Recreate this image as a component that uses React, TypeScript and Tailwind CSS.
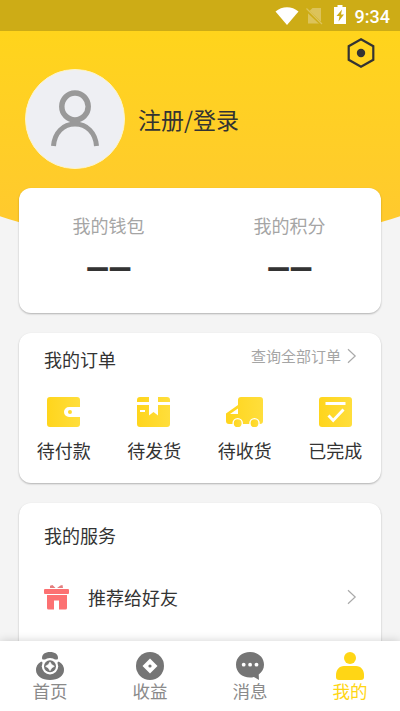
import type { ReactNode } from "react";

const WalletIcon = () => (
  <svg width="34" height="30" viewBox="0 0 34 30" fill="url(#gold)">
    <path d="M3 0h27a3 3 0 0 1 3 3v7H22a5 5 0 0 0 0 10h11v7a3 3 0 0 1-3 3H3a3 3 0 0 1-3-3V3a3 3 0 0 1 3-3z" />
    <circle cx="23" cy="15" r="2" />
  </svg>
);

const BoxIcon = () => (
  <svg width="34" height="30" viewBox="0 0 34 30" fill="url(#gold)" className="-ml-px">
    <path d="M3 0h9v5H0V3a3 3 0 0 1 3-3zM21 0h9a3 3 0 0 1 3 3v2H21z" />
    <path
      fillRule="evenodd"
      d="M0 8h12v10.500l4.500-3.500 4.500 3.500V8h12v19a3 3 0 0 1-3 3H3a3 3 0 0 1-3-3zM3 13v2h5v-2z"
    />
  </svg>
);

const TruckIcon = () => (
  <svg width="38" height="31" viewBox="0 0 38 31" fill="url(#gold)">
    <path
      fillRule="evenodd"
      d="M15 0h19a3 3 0 0 1 3 3v21a3 3 0 0 1-3 3H3a3 3 0 0 1-3-3v-7.500L12 8V3a3 3 0 0 1 3-3zM12 11.500L4 17h8z"
    />
    <circle cx="11.700" cy="26.200" r="4.600" stroke="#fff" strokeWidth="1.400" />
    <circle cx="28.500" cy="26.200" r="4.600" stroke="#fff" strokeWidth="1.400" />
  </svg>
);

const DoneIcon = () => (
  <svg width="33" height="30" viewBox="0 0 33 30">
    <rect width="33" height="30" rx="3" fill="url(#gold)" />
    <path d="M6.500 6.500h20M9.500 18.500l4.700 5L24.500 12.500" fill="none" stroke="#fff" strokeWidth="2.900" />
  </svg>
);

const HomeIcon = () => (
  <svg width="28" height="28" viewBox="0 0 28 28" fill="#757575">
    <path d="M6 6C6 2.300 9 0 14 0s8 2.300 8 6c0 1-.6 1.500-1.500 1.500h-13C6.600 7.500 6 7 6 6z" />
    <path d="M4.600 10c.8-.7 1.900-.4 2 1h14.800c.1-1.400 1.200-1.700 2-1A9.500 9.500 0 0 1 28 18c0 6-6 10-14 10S0 24 0 18a9.500 9.500 0 0 1 4.600-8z" />
    <circle cx="14" cy="14.300" r="8.200" fill="#fff" />
    <circle cx="14" cy="14.300" r="6" />
    <path d="M14 9.900l1.700 2.700 2.700 1.700-2.700 1.700-1.700 2.700-1.700-2.700-2.700-1.700 2.700-1.700z" fill="#fff" stroke="#fff" strokeWidth=".6" />
  </svg>
);

const CoinIcon = () => (
  <svg width="28" height="28" viewBox="0 0 28 28">
    <circle cx="14" cy="14" r="14" fill="#757575" />
    <path d="M14 6.500l7.500 7.500-7.500 7.500L6.500 14z" fill="#fff" />
    <circle cx="14" cy="14" r="1.600" fill="#757575" />
  </svg>
);

const MessageIcon = () => (
  <svg width="28" height="28" viewBox="0 0 28 28">
    <path
      d="M14 0C6 0 0 5.300 0 12.700S6 25.500 14 25.500c1.400 0 2.700-.1 3.900-.5l5.100 3-.3-5.500c3.300-2.300 5.300-5.800 5.300-9.800C28 5.300 22 0 14 0z"
      fill="#757575"
    />
    <g fill="#fff">
      <circle cx="7.700" cy="12.700" r="1.900" />
      <circle cx="14.100" cy="12.700" r="1.900" />
      <circle cx="20.500" cy="12.700" r="1.900" />
    </g>
  </svg>
);

const ProfileIcon = () => (
  <svg width="28" height="28" viewBox="0 0 28 28" fill="#ffd615">
    <circle cx="14" cy="6" r="6" />
    <path d="M8 14h12c5 0 8 4 8 9v2a3 3 0 0 1-3 3H3a3 3 0 0 1-3-3v-2c0-5 3-9 8-9z" />
  </svg>
);

const Chevron = () => (
  <svg width="10" height="16" viewBox="0 0 10 16" fill="none" stroke="#aaa" strokeWidth="1.200">
    <path d="M1 1.200L8.200 8 1 14.800" />
  </svg>
);

const orders = [
  { label: "待付款", icon: <WalletIcon /> },
  { label: "待发货", icon: <BoxIcon /> },
  { label: "待收货", icon: <TruckIcon /> },
  { label: "已完成", icon: <DoneIcon /> },
];

const tabs = [
  { label: "首页", icon: <HomeIcon />, active: false },
  { label: "收益", icon: <CoinIcon />, active: false },
  { label: "消息", icon: <MessageIcon />, active: false },
  { label: "我的", icon: <ProfileIcon />, active: true },
];

function Card({ className, children }: { className: string; children: ReactNode }) {
  return (
    <section
      className={`mx-[19px] rounded-xl bg-white shadow-[0_1px_2px_rgba(0,0,0,0.28)] ${className}`}
    >
      {children}
    </section>
  );
}

function Balance({ label }: { label: string }) {
  return (
    <div className="flex flex-1 flex-col items-center pt-[25px] pr-[2px]">
      <span className="text-[18px] leading-6 text-[#a5a5a5]">{label}</span>
      <span className="mt-[16px] font-[Roboto] text-[30px] leading-8 font-black text-[#333]">——</span>
    </div>
  );
}

function StatusBar() {
  return (
    <header className="relative flex h-[31px] shrink-0 items-center justify-end bg-[#cdac16] pr-[10px] text-white">
      <svg width="24" height="18" viewBox="0 0 24 18" fill="#fff" className="mr-[7px]">
        <path d="M0.500 4.500C7-1.200 17-1.200 23.500 4.500L12 18z" />
      </svg>
      <svg width="17" height="18" viewBox="0 0 17 18" className="mr-[11px]">
        <path d="M6.500 1H15v15.500H2V5.500z" fill="#dcc35a" />
        <path d="M0 2.500L15.500 17" stroke="#cdac16" strokeWidth="3" />
        <path d="M.500 1.500L16 17" stroke="#dcc35a" strokeWidth="1.300" />
      </svg>
      <svg width="12" height="19" viewBox="0 0 12 19" className="mr-[9px] -mt-[3px]">
        <path d="M3.500 0h5v2H12v17H0V2h3.500z" fill="#fff" />
        <path d="M8 4.500L2.500 11h3l-1 5.500L10 9.500H7z" fill="#cdac16" />
      </svg>
      <span className="mt-[3px] font-[Roboto] text-[18px] leading-5 font-medium">9:34</span>
    </header>
  );
}

export default function App() {
  return (
    <div className="relative flex h-[711px] w-full flex-col overflow-hidden bg-[#f4f4f4] font-['Noto_Sans_CJK_SC',sans-serif]">
      <svg width="0" height="0" className="absolute">
        <defs>
          <linearGradient id="gold">
            <stop offset="0" stopColor="#ffd51c" />
            <stop offset="1" stopColor="#ffde3c" />
          </linearGradient>
        </defs>
      </svg>
      {/* curved backdrop behind the profile */}
      <div className="absolute inset-x-0 top-0 h-[250px] bg-linear-to-b from-[#ffd617] to-[#ffca2d] to-85% [clip-path:circle(625px_at_50%_-376px)]" />
      <StatusBar />

      <main className="relative min-h-0 flex-1 overflow-hidden">
        <div className="flex h-[38px] justify-end pt-[7px] pr-[25px]">
          <svg width="28" height="30" viewBox="0 0 28 30">
            <path d="M14 1.300l12.300 6.900v13.600L14 28.700 1.700 21.800V8.200z" fill="none" stroke="#333" strokeWidth="2.200" />
            <circle cx="14" cy="15" r="4.200" fill="#333" />
          </svg>
        </div>

        <div className="flex items-center pl-[25px]">
          <div className="flex size-[100px] justify-center rounded-full border border-[#fff5c5] bg-[#eeeff3] pt-[20px]">
            <svg width="50" height="58" viewBox="0 0 50 58" fill="none" stroke="#999">
              <ellipse cx="25" cy="16.500" rx="13.200" ry="13.500" strokeWidth="5.500" />
              <path d="M3.500 56C4.500 43 13 34 25 34s20.500 9 21.500 22" strokeWidth="5" />
            </svg>
          </div>
          <span className="-mt-px ml-[13px] text-[23px] leading-8 text-[#333]">注册/登录</span>
        </div>

        <Card className="mt-[19px] flex h-[125px]">
          <Balance label="我的钱包" />
          <Balance label="我的积分" />
        </Card>

        <Card className="mt-5 h-[150px] pt-[14px]">
          <div className="flex items-center justify-between pr-6 pl-[25px]">
            <h2 className="text-[18px] leading-6 text-[#333]">我的订单</h2>
            <a className="-mt-[6px] flex items-center gap-[6px] text-[15px] leading-5 text-[#a5a5a5]">
              查询全部订单
              <Chevron />
            </a>
          </div>
          <ul className="mt-[26px] grid grid-cols-4">
            {orders.map((order) => (
              <li key={order.label} className="flex flex-col items-center">
                <div className="flex h-[31px]">{order.icon}</div>
                <span className="mt-[10px] -ml-px text-[18px] leading-6 text-[#333]">{order.label}</span>
              </li>
            ))}
          </ul>
        </Card>

        <Card className="mt-5 h-[200px] pt-5">
          <h2 className="pl-[25px] text-[18px] leading-6 text-[#333]">我的服务</h2>
          <div className="mt-[37px] flex items-center pr-6 pl-[25px]">
            <svg width="25" height="25" viewBox="0 0 25 25" fill="#fc7172" className="mt-px">
              <path d="M6 3V.800L8.500 0l3 3zM13 3l3.500-2.500L18.500 0l.5 3z" fill="#e47e7e" />
              <rect y="4" width="25" height="5" rx="1" />
              <path d="M3 10h20V23a1.500 1.500 0 0 1-1.500 1.500H15v-9h-5v9H4.500A1.500 1.500 0 0 1 3 23z" />
            </svg>
            <span className="ml-[19px] flex-1 text-[18px] leading-6 text-[#333]">推荐给好友</span>
            <Chevron />
          </div>
        </Card>
      </main>

      <nav className="relative grid h-[70px] shrink-0 grid-cols-4 bg-white shadow-[0_0_9px_rgba(0,0,0,0.18)]">
        {tabs.map((tab) => (
          <a key={tab.label} className="flex flex-col items-center pt-[11px]">
            {tab.icon}
            <span
              className={
                tab.active
                  ? "-mt-px text-[17.500px] leading-6 text-[#ffd615]"
                  : "-mt-px text-[17.500px] leading-6 text-[#8a8a8a]"
              }
            >
              {tab.label}
            </span>
          </a>
        ))}
      </nav>
    </div>
  );
}
